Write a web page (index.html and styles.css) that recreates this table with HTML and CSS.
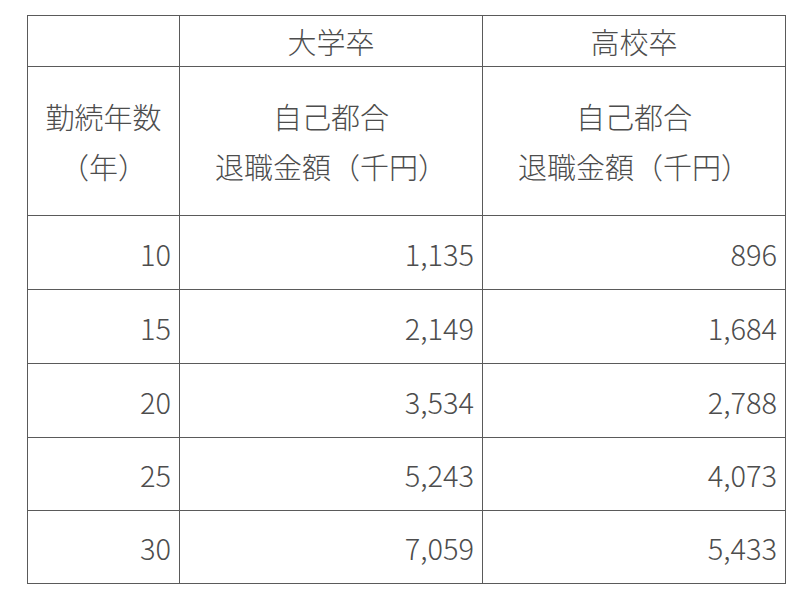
FILE: index.html
```html
<!DOCTYPE html>
<html lang="ja">
<head>
<meta charset="utf-8">
<link rel="stylesheet" href="styles.css">
</head>
<body>
<table class="tbl">
  <colgroup>
    <col class="c1">
    <col class="c2">
    <col class="c3">
  </colgroup>
  <tr class="h1">
    <td></td>
    <td class="ctr">大学卒</td>
    <td class="ctr">高校卒</td>
  </tr>
  <tr class="h2">
    <td class="ctr">勤続年数<br>（年）</td>
    <td class="ctr">自己都合<br>退職金額（千円）</td>
    <td class="ctr">自己都合<br>退職金額（千円）</td>
  </tr>
  <tr class="r"><td class="num">10</td><td class="num">1,135</td><td class="num">896</td></tr>
  <tr class="r"><td class="num">15</td><td class="num">2,149</td><td class="num">1,684</td></tr>
  <tr class="r"><td class="num">20</td><td class="num">3,534</td><td class="num">2,788</td></tr>
  <tr class="r s"><td class="num">25</td><td class="num">5,243</td><td class="num">4,073</td></tr>
  <tr class="r s"><td class="num">30</td><td class="num">7,059</td><td class="num">5,433</td></tr>
</table>
</body>
</html>
```
FILE: styles.css
```css
html, body {
  margin: 0;
  padding: 0;
  background: #fff;
}
body {
  padding: 15px 0 0 27px;
  font-family: "Noto Sans CJK JP", "Noto Sans", sans-serif;
  color: #4d4d4d;
}
.tbl {
  border-collapse: collapse;
  table-layout: fixed;
  width: 759px;
  font-size: 29px;
  font-weight: 300;
}
.c1 { width: 152px; }
.c2 { width: 303px; }
.c3 { width: 303px; }
.tbl td {
  border: 1px solid #5a5a5a;
  padding: 0 8px;
  vertical-align: middle;
  line-height: 50px;
}
.h1 td { height: 50px; }
.h2 td { height: 148px; }
.r td { height: 73px; }
.r.s td { height: 72px; }
.ctr { text-align: center; }
.num { text-align: right; }
```
